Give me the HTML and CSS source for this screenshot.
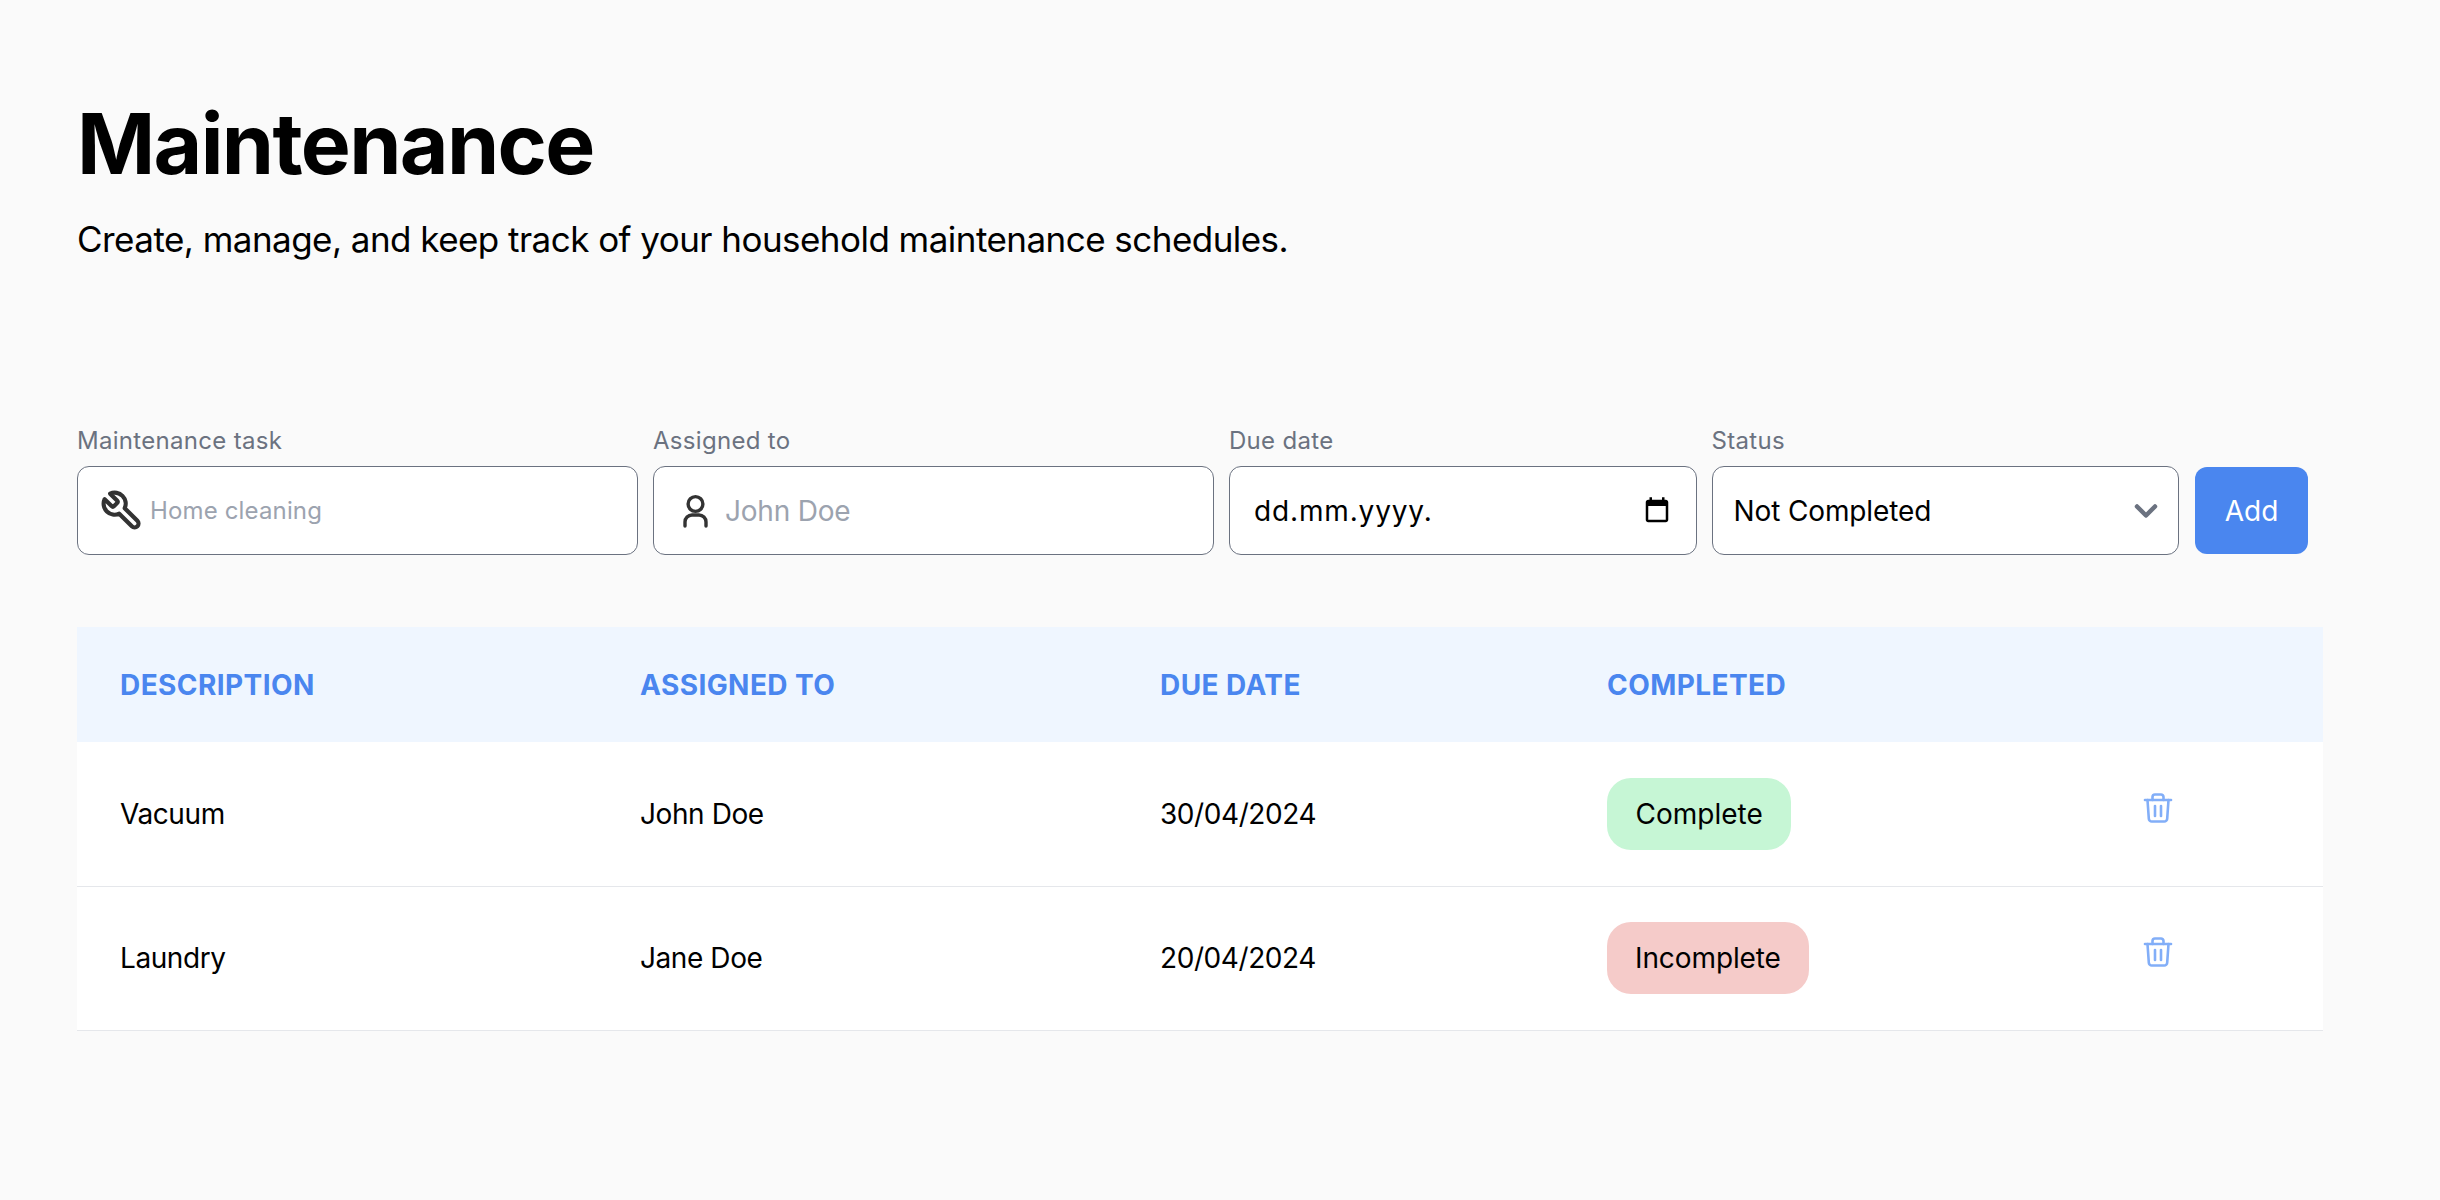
FILE: index.html
```html
<!DOCTYPE html>
<html lang="en">
<head>
<meta charset="utf-8">
<title>Maintenance</title>
<link rel="stylesheet" href="styles.css">
</head>
<body>
<main class="page">
  <header class="head">
    <h1 class="title">Maintenance</h1>
    <p class="subtitle">Create, manage, and keep track of your household maintenance schedules.</p>
  </header>
  <form class="form">
    <div class="field field-wide">
      <label class="label">Maintenance task</label>
      <div class="control">
        <svg class="icon icon-wrench" viewBox="0 0 24 24" fill="none" stroke="#333" stroke-width="2.3" stroke-linecap="round" stroke-linejoin="round"><path d="M14.7 6.3a1 1 0 0 0 0 1.4l1.6 1.6a1 1 0 0 0 1.4 0l3.77-3.77a6 6 0 0 1-7.94 7.94l-6.91 6.91a2.12 2.12 0 0 1-3-3l6.91-6.91a6 6 0 0 1 7.94-7.94l-3.76 3.76z" transform="matrix(-1 0 0 1 24 0)"/></svg>
        <input class="input input-small" placeholder="Home cleaning">
      </div>
    </div>
    <div class="field field-wide">
      <label class="label">Assigned to</label>
      <div class="control">
        <svg class="icon icon-user" viewBox="0 0 42 42" fill="none" stroke="#333" stroke-width="3.4" stroke-linecap="round" stroke-linejoin="round"><circle cx="20.5" cy="14" r="7.4"/><path d="M10 36v-4a7 7 0 0 1 7-7h7a7 7 0 0 1 7 7v4"/></svg>
        <input class="input" placeholder="John Doe">
      </div>
    </div>
    <div class="field field-narrow">
      <label class="label">Due date</label>
      <div class="control control-date">
        <span class="value date-value">dd.mm.yyyy.</span>
        <svg class="cal" viewBox="0 0 24 24"><path d="M19 3h-1V1h-2v2H8V1H6v2H5c-1.1 0-2 .9-2 2v14c0 1.1.9 2 2 2h14c1.100 0 2-.9 2-2V5c0-1.100-.9-2-2-2zm0 16H5V8h14v11z"/></svg>
      </div>
    </div>
    <div class="field field-narrow">
      <label class="label">Status</label>
      <div class="control control-select">
        <span class="value">Not Completed</span>
        <svg class="chev" viewBox="0 0 20 20" fill="none" stroke="#6b7280" stroke-width="3" stroke-linecap="round" stroke-linejoin="round"><path d="M4 7l6 6 6-6"/></svg>
      </div>
    </div>
    <button class="add" type="button">Add</button>
  </form>
  <table class="table">
    <thead>
      <tr>
        <th class="col-a">Description</th>
        <th class="col-b">Assigned to</th>
        <th class="col-c">Due date</th>
        <th class="col-d">Completed</th>
        <th></th>
      </tr>
    </thead>
    <tbody>
      <tr>
        <td>Vacuum</td>
        <td>John Doe</td>
        <td>30/04/2024</td>
        <td><span class="pill pill-ok">Complete</span></td>
        <td class="cell-trash"><svg class="trash" viewBox="0 0 32 32" fill="none" stroke="#82aef8" stroke-width="2.6" stroke-linecap="round" stroke-linejoin="round"><path d="M3 8h26"/><path d="M10.500 8V5a2.500 2.500 0 0 1 2.500-2.500h6a2.500 2.500 0 0 1 2.500 2.500v3"/><path d="M5.500 8l1.300 18.500a3 3 0 0 0 3 3h12.400a3 3 0 0 0 3-3L26.500 8"/><path d="M13 14v10"/><path d="M19 14v10"/></svg></td>
      </tr>
      <tr>
        <td>Laundry</td>
        <td>Jane Doe</td>
        <td>20/04/2024</td>
        <td><span class="pill pill-bad">Incomplete</span></td>
        <td class="cell-trash"><svg class="trash" viewBox="0 0 32 32" fill="none" stroke="#82aef8" stroke-width="2.6" stroke-linecap="round" stroke-linejoin="round"><path d="M3 8h26"/><path d="M10.500 8V5a2.500 2.500 0 0 1 2.500-2.500h6a2.500 2.500 0 0 1 2.500 2.500v3"/><path d="M5.500 8l1.300 18.500a3 3 0 0 0 3 3h12.400a3 3 0 0 0 3-3L26.500 8"/><path d="M13 14v10"/><path d="M19 14v10"/></svg></td>
      </tr>
    </tbody>
  </table>
</main>
</body>
</html>
```
FILE: styles.css
```css
* { box-sizing: border-box; }
html, body { margin: 0; height: 100%; }
body {
  background: #fafafa;
  color: #000;
  font-family: Inter, "Liberation Sans", sans-serif;
}
.page { padding: 98px 117px 0 77px; }
.head { margin-bottom: 162px; }
.title {
  margin: 0;
  font-size: 84px;
  line-height: 92px;
  font-weight: 700;
  letter-spacing: -1.65px;
}
.subtitle {
  margin: 24px 0 0;
  font-size: 35px;
  line-height: 50px;
  letter-spacing: -0.54px;
}
.form { display: flex; align-items: flex-end; gap: 15px; }
.field { display: flex; flex-direction: column; gap: 10px; }
.field-wide { width: 561px; }
.field-narrow { width: 467.5px; }
.label { font-size: 24px; line-height: 30px; color: #6b7280; letter-spacing: 0.3px; }
.control {
  display: flex;
  align-items: center;
  height: 89px;
  padding: 0 24px;
  background: #fff;
  border: 1px solid #6b7280;
  border-radius: 12px;
}
.control-select { padding-left: 21px; }
.icon { flex: none; }
.icon-wrench { width: 44px; height: 44px; margin-left: -2px; }
.icon-user { width: 42px; height: 42px; margin-left: -3px; }
.input {
  flex: 1;
  min-width: 0;
  margin-left: 6px;
  border: 0;
  outline: 0;
  padding: 0;
  background: transparent;
  font: inherit;
  font-size: 28px;
  letter-spacing: -0.2px;
}
.input-small { font-size: 24px; letter-spacing: 0.15px; margin-left: 6px; }
.icon-user + .input { margin-left: 8px; }
.input::placeholder { color: #9ca3af; opacity: 1; }
.value { flex: 1; font-size: 28px; letter-spacing: -0.12px; }
.date-value { letter-spacing: 0.85px; }
.cal { width: 30px; height: 30px; flex: none; margin-right: 0; }
.chev { width: 30px; height: 30px; flex: none; margin-right: -7px; }
.add {
  width: 113px;
  height: 87px;
  margin: 0 0 1px 1px;
  border: 0;
  border-radius: 12px;
  background: #4a86ef;
  color: #fff;
  font: inherit;
  font-size: 28px;
}
.table {
  width: 100%;
  margin-top: 72px;
  border-collapse: collapse;
  table-layout: fixed;
  background: #fff;
}
th {
  height: 115px;
  padding: 0 0 0 43px;
  background: #eff6ff;
  color: #4a86ef;
  font-size: 28px;
  font-weight: 700;
  text-align: left;
  text-transform: uppercase;
  letter-spacing: 0.42px;
}
.col-a, .col-b { width: 520px; }
.col-c { width: 447px; }
.col-d { width: 447px; }
td {
  height: 144px;
  padding: 0 0 0 43px;
  font-size: 28px;
  border-bottom: 1px solid #e5e7eb;
  letter-spacing: -0.42px;
}
.pill {
  display: inline-block;
  padding: 0 28.500px;
  line-height: 72px;
  border-radius: 24px;
  letter-spacing: 0;
}
.pill-ok { background: #c6f6d5; }
.pill-bad { background: #f5cbc9; padding: 0 28px; letter-spacing: -0.1px; }
.cell-trash { padding-left: 0; }
.trash { display: block; width: 32px; height: 32px; margin: -12px 0 0 131px; }
```
